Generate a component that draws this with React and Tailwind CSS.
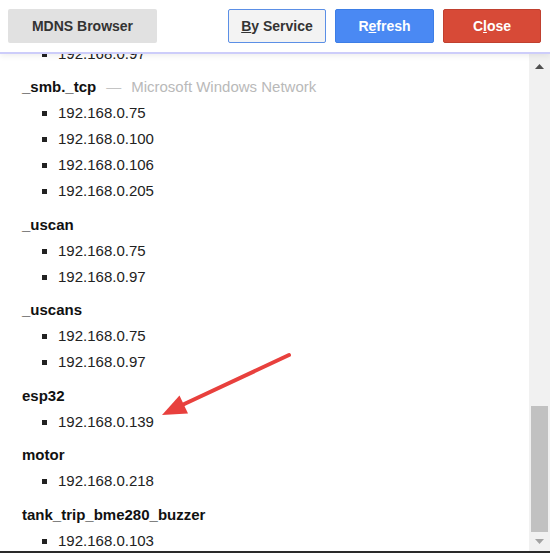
import React from "react";

const groups = [
  { name: null, items: ["192.168.0.97"] },
  {
    name: "_smb._tcp",
    desc: "Microsoft Windows Network",
    items: ["192.168.0.75", "192.168.0.100", "192.168.0.106", "192.168.0.205"],
  },
  { name: "_uscan", items: ["192.168.0.75", "192.168.0.97"] },
  { name: "_uscans", items: ["192.168.0.75", "192.168.0.97"] },
  { name: "esp32", items: ["192.168.0.139"] },
  { name: "motor", items: ["192.168.0.218"] },
  { name: "tank_trip_bme280_buzzer", items: ["192.168.0.103"] },
];

function Group({ group }) {
  return (
    <div className="mb-[7.5px]">
      {group.name && (
        <div className="leading-[26px] font-bold text-[#111]">
          {group.name}
          {group.desc && (
            <>
              <span className="ml-[10px] font-normal text-[#c4c4c4]">—</span>
              <span className="ml-[10px] font-normal text-[#b9b9b9]">
                {group.desc}
              </span>
            </>
          )}
        </div>
      )}
      <ul className="list-[square] pl-[36px]">
        {group.items.map((ip, i) => (
          <li key={i} className="leading-[26px] text-[#222]">
            {ip}
          </li>
        ))}
      </ul>
    </div>
  );
}

export default function App() {
  return (
    <div
      className="relative flex h-[553px] w-[550px] flex-col overflow-hidden bg-white"
      style={{ fontFamily: '"Liberation Sans", Arial, sans-serif' }}
    >
      {/* Toolbar */}
      <div className="relative z-10 flex h-[54px] shrink-0 items-start border-b-2 border-[#cdcdfa] bg-white pt-[9px] shadow-[0_2px_6px_rgba(0,0,0,0.07)]">
        <div className="ml-[8px] flex h-[34px] w-[149px] items-center justify-center rounded-[2px] bg-[#e1e1e1] text-[14px] font-bold text-[#333]">
          MDNS Browser
        </div>
        <div className="ml-auto flex gap-[9px] pr-[9px]">
          <button className="flex h-[34px] w-[98px] items-center justify-center rounded-[2px] border border-[#5b8fe6] bg-[#f3f3f3] text-[14px] font-bold text-[#333]">
            <span className="underline">B</span>y Service
          </button>
          <button className="flex h-[34px] w-[99px] items-center justify-center rounded-[2px] border border-[#3d7ee6] bg-[#4a89f3] text-[14px] font-bold text-white">
            R<span className="underline">e</span>fresh
          </button>
          <button className="flex h-[34px] w-[98px] items-center justify-center rounded-[2px] border border-[#c0402f] bg-[#d74a37] text-[14px] font-bold text-white">
            C<span className="underline">l</span>ose
          </button>
        </div>
      </div>

      {/* Content + scrollbar */}
      <div className="flex min-h-0 flex-1">
        <div className="min-w-0 flex-1 overflow-hidden pl-[22px] text-[15px]">
          <div className="mt-[-13.5px]">
            {groups.map((g, i) => (
              <Group key={i} group={g} />
            ))}
          </div>
        </div>
        <div className="flex w-[21px] shrink-0 flex-col bg-[#f1f1f1]">
          <div className="flex h-[24px] items-center justify-center">
            <svg width="9" height="5" viewBox="0 0 9 5">
              <polygon points="4.5,0 9,5 0,5" fill="#505050" />
            </svg>
          </div>
          <div className="flex-1" />
          <div className="mx-[2px] h-[126px] bg-[#c1c1c1]" />
          <div className="flex h-[19px] items-center justify-center">
            <svg width="9" height="5" viewBox="0 0 9 5">
              <polygon points="0,0 9,0 4.5,5" fill="#a3a3a3" />
            </svg>
          </div>
        </div>
      </div>
      <div className="h-[2px] shrink-0 bg-[#2a2a2a]" />

      {/* Annotation arrow */}
      <svg
        className="pointer-events-none absolute left-0 top-0"
        width="550"
        height="553"
      >
        <line
          x1="289"
          y1="355"
          x2="180"
          y2="406"
          stroke="#e8403d"
          strokeWidth="4"
          strokeLinecap="round"
        />
        <polygon points="162,415 188,413.5 179.5,395.5" fill="#e8403d" />
      </svg>
    </div>
  );
}
